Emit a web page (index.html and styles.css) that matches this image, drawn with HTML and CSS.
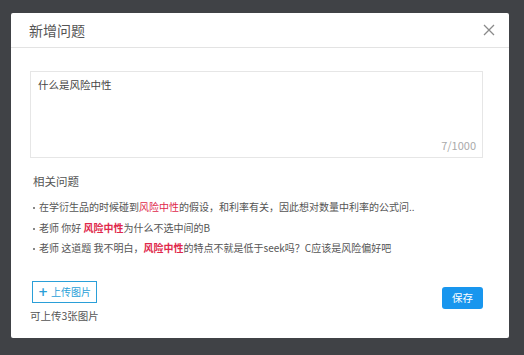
FILE: index.html
```html
<!DOCTYPE html>
<html lang="zh-CN">
<head>
<meta charset="utf-8">
<link rel="stylesheet" href="styles.css">
</head>
<body>
<div class="dialog">
  <div class="dialog-header">
    <span class="dialog-title">新增问题</span>
    <svg class="close" width="12" height="12" viewBox="0 0 12 12"><path d="M1 1L11 11M11 1L1 11" stroke="#8a8a8a" stroke-width="1.3" fill="none"/></svg>
  </div>
  <div class="dialog-body">
    <div class="textarea">
      <div class="textarea-text">什么是风险中性</div>
      <div class="counter">7/1000</div>
    </div>
    <div class="related">
      <div class="related-title">相关问题</div>
      <ul class="related-list">
        <li>在学衍生品的时候碰到<span class="hl">风险中性</span>的假设，和利率有关，因此想对数量中利率的公式问..</li>
        <li>老师 你好 <span class="hl bold">风险中性</span>为什么不选中间的B</li>
        <li>老师 这道题 我不明白，<span class="hl bold">风险中性</span>的特点不就是低于seek吗？C应该是风险偏好吧</li>
      </ul>
    </div>
    <div class="footer">
      <div class="upload">
        <div class="upload-btn"><span class="plus">+</span>上传图片</div>
        <div class="upload-tip">可上传3张图片</div>
      </div>
      <div class="save">保存</div>
    </div>
  </div>
</div>
</body>
</html>
```
FILE: styles.css
```css
html, body {
  margin: 0;
  padding: 0;
  background: #404246;
  height: 100%;
}
body {
  font-family: "Noto Sans CJK SC", "Noto Sans", sans-serif;
  padding-top: 13px;
  padding-left: 11px;
  box-sizing: border-box;
}
.dialog {
  width: 498px;
  height: 325px;
  background: #fff;
  border-radius: 2px;
  display: flex;
  flex-direction: column;
}
.dialog-header {
  height: 35px;
  border-bottom: 1px solid #e3e3e3;
  display: flex;
  align-items: center;
  justify-content: space-between;
  padding: 0 14px 0 18px;
  box-sizing: border-box;
  flex-shrink: 0;
}
.dialog-title {
  font-size: 14px;
  color: #555;
}
.close {
  display: block;
}
.dialog-body {
  padding: 23px 26px 0 19px;
  display: flex;
  flex-direction: column;
}
.textarea {
  height: 87px;
  border: 1px solid #e6e6e6;
  box-sizing: border-box;
  display: flex;
  flex-direction: column;
  justify-content: space-between;
  padding: 6px 6px 5px 7px;
}
.textarea-text {
  font-size: 10.5px;
  color: #444;
  line-height: 14px;
}
.counter {
  align-self: flex-end;
  font-size: 11px;
  color: #aaa;
  line-height: 14px;
}
.related {
  padding: 15px 0 0 2px;
}
.related-title {
  font-size: 11.5px;
  color: #555;
  line-height: 16px;
  padding-left: 1px;
}
.related-list {
  list-style: none;
  margin: 8px 0 0;
  padding: 0;
  font-family: "Noto Sans CJK TC", "Noto Sans CJK SC", sans-serif;
}
.related-list li {
  font-size: 10px;
  color: #555;
  line-height: 20.5px;
  white-space: nowrap;
}
.related-list li::before {
  content: "";
  display: inline-block;
  vertical-align: middle;
  width: 2px;
  height: 2px;
  background: #888;
  margin-right: 4px;
  margin-left: 1px;
}
.hl {
  color: #e0284b;
}
.bold {
  font-weight: bold;
}
.footer {
  margin-top: 22px;
  display: flex;
  justify-content: space-between;
  align-items: flex-start;
}
.upload {
  display: flex;
  flex-direction: column;
  align-items: flex-start;
}
.upload-btn {
  margin-left: 2px;
  width: 65px;
  height: 22px;
  box-sizing: border-box;
  border: 1px solid #2a9fd8;
  color: #2a9fd8;
  font-size: 10px;
  display: flex;
  align-items: center;
  justify-content: center;
}
.plus {
  font-weight: bold;
  font-size: 12px;
  margin-right: 3px;
  font-family: "DejaVu Sans", sans-serif;
}
.upload-tip {
  margin-top: 5px;
  font-size: 10.5px;
  color: #555;
  line-height: 16px;
}
.save {
  margin-top: 6px;
  width: 41px;
  height: 22px;
  background: #1896ee;
  border-radius: 3px;
  color: #fff;
  font-size: 10.5px;
  display: flex;
  align-items: center;
  justify-content: center;
}
```
